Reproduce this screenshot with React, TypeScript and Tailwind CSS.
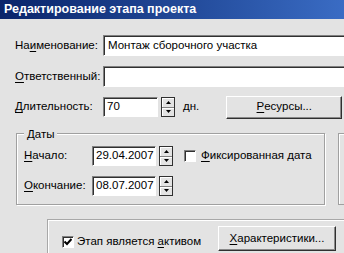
import React from 'react';

const sunken =
  'bg-white border border-t-[#808080] border-l-[#808080] border-b-white border-r-white shadow-[inset_1px_1px_0_#303030]';
const raised =
  'bg-[#e3e3e3] border border-t-white border-l-white border-b-[#303030] border-r-[#303030] shadow-[inset_-1px_-1px_0_#8a8a8a]';

const U: React.FC<{ children: React.ReactNode }> = ({ children }) => (
  <span className="underline underline-offset-2">{children}</span>
);

const Spinner: React.FC = () => (
  <div className="ml-[3px] flex h-[20px] w-[14px] shrink-0 flex-col border border-[#303030] bg-[#e3e3e3]">
    <div className="flex flex-1 items-center justify-center border-b border-[#808080] shadow-[inset_1px_1px_0_white]">
      <svg width="5" height="3" viewBox="0 0 5 3"><path d="M2.5 0 L5 3 L0 3 Z" fill="#000" /></svg>
    </div>
    <div className="flex flex-1 items-center justify-center shadow-[inset_1px_1px_0_white]">
      <svg width="5" height="3" viewBox="0 0 5 3"><path d="M0 0 L5 0 L2.5 3 Z" fill="#000" /></svg>
    </div>
  </div>
);

const CheckBox: React.FC<{ checked?: boolean }> = ({ checked }) => (
  <div className={`flex h-[12px] w-[12px] shrink-0 items-center justify-center ${sunken}`}>
    {checked && (
      <svg width="8" height="8" viewBox="0 0 8 8">
        <path d="M0.5 3.5 L3 6 L7.5 1" stroke="#000" strokeWidth="2" fill="none" />
      </svg>
    )}
  </div>
);

export default function App() {
  return (
    <div
      className="flex h-[253px] w-[344px] flex-col overflow-hidden whitespace-nowrap bg-[#e3e3e3] text-[11.5px] text-black"
      style={{ fontFamily: '"Liberation Sans", Arial, sans-serif' }}
    >
      <div className="flex h-[19px] shrink-0 items-center bg-gradient-to-r from-[#0a246a] to-[#3a6cc4] pl-[4px] text-[12.5px] font-bold text-white">
        Редактирование этапа проекта
      </div>

      <div className="flex flex-1 flex-col pl-[15px] pt-[16px]">
        <div className="flex h-[21px] items-center">
          <div className="w-[88px] shrink-0">На<U>и</U>менование:</div>
          <div className={`flex h-[21px] w-[260px] shrink-0 items-center pl-[4px] ${sunken}`}>
            Монтаж сборочного участка
          </div>
        </div>

        <div className="mt-[10px] flex h-[21px] items-center">
          <div className="w-[88px] shrink-0"><U>О</U>тветственный:</div>
          <div className={`h-[21px] w-[260px] shrink-0 ${sunken}`} />
        </div>

        <div className="mt-[9px] flex h-[22px] items-center">
          <div className="w-[88px] shrink-0"><U>Д</U>лительность:</div>
          <div className={`flex h-[20px] w-[55px] shrink-0 items-center pl-[3px] ${sunken}`}>70</div>
          <Spinner />
          <div className="ml-[8px]">дн.</div>
          <div className={`ml-[27px] flex h-[23px] w-[116px] shrink-0 items-center justify-center ${raised}`}>
            <U>Р</U>есурсы...
          </div>
        </div>

        <div className="mt-[15px] flex">
          <div className="relative ml-[1px] h-[72px] w-[309px] shrink-0 border border-[#a0a0a0] shadow-[inset_1px_1px_0_white,1px_1px_0_white]">
            <div className="absolute left-[7px] top-[-8px] bg-[#e3e3e3] px-[3px]">Даты</div>
            <div className="flex flex-col pl-[7px] pt-[12px]">
              <div className="flex h-[20px] items-center">
                <div className="w-[68px] shrink-0"><U>Н</U>ачало:</div>
                <div className={`flex h-[20px] w-[64px] shrink-0 items-center pl-[3px] ${sunken}`}>29.04.2007</div>
                <Spinner />
                <div className="ml-[11px]"><CheckBox /></div>
                <div className="ml-[5px]"><U>Ф</U>иксированная дата</div>
              </div>
              <div className="mt-[10px] flex h-[20px] items-center">
                <div className="w-[68px] shrink-0"><U>О</U>кончание:</div>
                <div className={`flex h-[20px] w-[64px] shrink-0 items-center pl-[3px] ${sunken}`}>08.07.2007</div>
                <Spinner />
              </div>
            </div>
          </div>
          <div className="ml-[13px] h-[72px] w-[40px] shrink-0 border border-[#a0a0a0] shadow-[inset_1px_1px_0_white]" />
        </div>

        <div className="ml-[32px] mt-[14px] flex flex-1 items-start border-l border-t border-[#a8a8a8] pl-[14px] pt-[6px] shadow-[inset_1px_1px_0_white]">
          <div className="mt-[7px] flex w-[156px] shrink-0 items-center">
            <CheckBox checked />
            <div className="ml-[3px]">Этап является <U>а</U>ктивом</div>
          </div>
          <div className={`flex h-[25px] w-[118px] shrink-0 items-center justify-center ${raised}`}>
            <U>Х</U>арактеристики...
          </div>
        </div>
      </div>
    </div>
  );
}
